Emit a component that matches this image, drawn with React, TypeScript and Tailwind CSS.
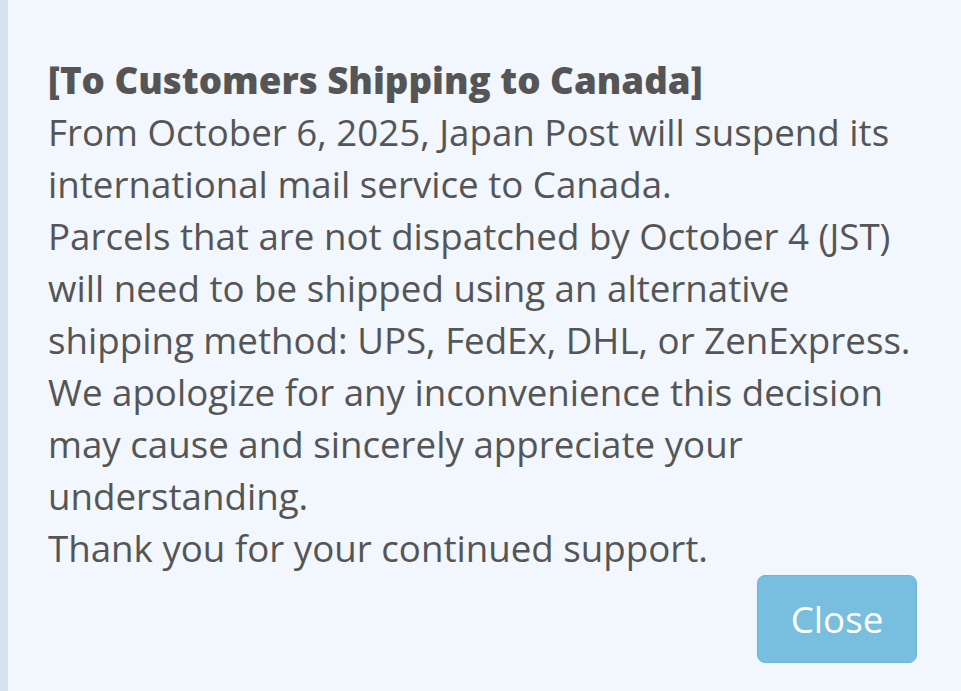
import React from "react";

const lines = [
  "From October 6, 2025, Japan Post will suspend its",
  "international mail service to Canada.",
  "Parcels that are not dispatched by October 4 (JST)",
  "will need to be shipped using an alternative",
  "shipping method: UPS, FedEx, DHL, or ZenExpress.",
  "We apologize for any inconvenience this decision",
  "may cause and sincerely appreciate your",
  "understanding.",
  "Thank you for your continued support.",
];

export default function App() {
  return (
    <div className="flex h-[691px] w-full overflow-hidden bg-[#f2f6fd] font-['Open_Sans',sans-serif] text-[#555555]">
      <div className="w-[8px] shrink-0 bg-[#d5e3f1]" />
      <div className="flex flex-1 flex-col pl-[40px] pr-[44px] pt-[54px]">
        <div className="text-[36.7px] leading-[52px]">
          <div className="whitespace-nowrap font-extrabold">[To Customers Shipping to Canada]</div>
          {lines.map((l) => (
            <div key={l} className="whitespace-nowrap">
              {l}
            </div>
          ))}
        </div>
        <div className="flex justify-end pt-px">
          <button className="flex h-[88px] w-[160px] items-center justify-center rounded-[8px] border border-[#6db6d8] bg-[#77bedf] text-[36.7px] leading-[52px] text-white">
            Close
          </button>
        </div>
      </div>
    </div>
  );
}
